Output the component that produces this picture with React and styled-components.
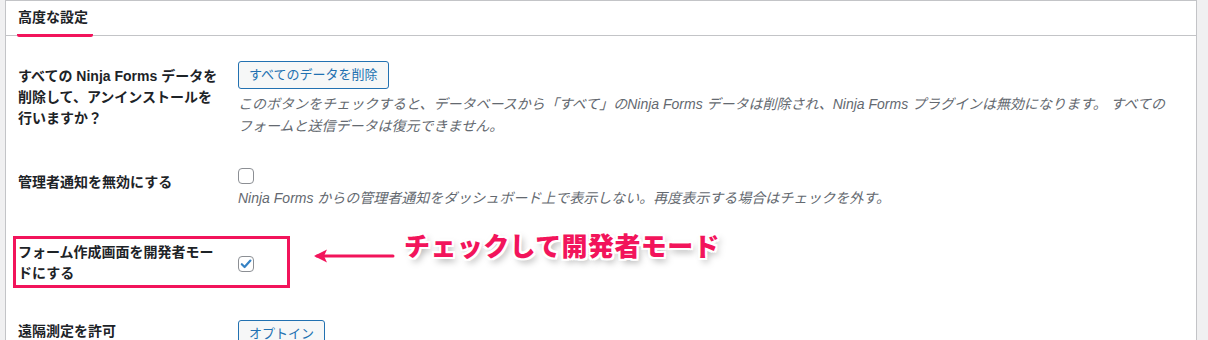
import styled, { createGlobalStyle } from "styled-components";

const GlobalStyle = createGlobalStyle`
  html, body {
    margin: 0;
    padding: 0;
    background: #f0f0f1;
    font-family: "Liberation Sans", "Noto Sans CJK JP", sans-serif;
    color: #1d2327;
  }
`;

const PINK = "#f2145b";

const Page = styled.div`
  padding: 0 11px 0 5px;
  height: 340px;
  overflow: hidden;
`;

const Panel = styled.div`
  background: #fff;
  border: 1px solid #c3c4c7;
  border-bottom: none;
  min-height: 360px;
`;

const Header = styled.div`
  height: 34px;
  border-bottom: 1px solid #c3c4c7;
  padding-left: 11px;
  display: flex;
  align-items: flex-end;
`;

const Tab = styled.h2`
  margin: 0;
  font-size: 14px;
  font-weight: 700;
  line-height: 20px;
  padding: 0 5px 7px 1px;
  position: relative;
  top: 2px;
  border-bottom: 3px solid ${PINK};
  border-radius: 2px;
`;

const Table = styled.div`
  margin-top: 10px;
`;

const Row = styled.div`
  display: grid;
  grid-template-columns: 220px 1fr;
  padding-left: 12px;
  position: relative;
`;

const Label = styled.div`
  font-size: 14px;
  font-weight: 700;
  line-height: 21px;
  padding: 20px 10px ${(p) => p.$bottom ?? 20}px 0;
  width: 200px;
`;

const Field = styled.div`
  display: flex;
  flex-direction: column;
  align-items: flex-start;
  padding: ${(p) => p.$top ?? 15}px 10px ${(p) => p.$bottom ?? 15}px 0;
`;

const Button = styled.button`
  font-family: inherit;
  font-size: 13px;
  color: #2271b1;
  background: #f6f7f7;
  border: 1px solid #2271b1;
  border-radius: 3px;
  height: 28px;
  padding: 0 10px;
  line-height: 26px;
  cursor: pointer;
`;

const Box = styled.span`
  display: block;
  width: 16px;
  height: 16px;
  box-sizing: border-box;
  border: 1px solid #8c8f94;
  border-radius: 4px;
  background: #fff;
  position: relative;
  svg {
    position: absolute;
    left: 1px;
    top: 1px;
  }
`;

const Description = styled.p`
  margin: ${(p) => p.$gap ?? 4}px 0 0;
  font-size: 14px;
  line-height: 22px;
  font-style: italic;
  color: #646970;
  max-width: 930px;
`;

const Highlight = styled.div`
  position: absolute;
  left: 7px;
  top: 14px;
  width: 277px;
  height: 52px;
  box-sizing: border-box;
  border: 3px solid ${PINK};
  pointer-events: none;
`;

const Callout = styled.div`
  position: absolute;
  left: 307px;
  top: 7px;
  display: flex;
  align-items: flex-start;
  gap: 9px;
  pointer-events: none;
  svg {
    margin-top: 19px;
  }
`;

const CalloutText = styled.span`
  font-family: "Noto Sans CJK JP", sans-serif;
  font-size: 26px;
  line-height: 31px;
  font-weight: 900;
  letter-spacing: 0.4px;
  color: ${PINK};
  text-shadow: 2px 0 #fff, -2px 0 #fff, 0 2px #fff, 0 -2px #fff,
    2px 2px #fff, -2px -2px #fff, 2px -2px #fff, -2px 2px #fff,
    3px 4px 7px rgba(0, 0, 0, 0.35);
`;

const Checkbox = ({ checked }) => (
  <Box>
    {checked && (
      <svg width="12" height="12" viewBox="0 0 12 12">
        <path
          d="M1.8 6.2 L4.6 9 L10.4 2.6"
          fill="none"
          stroke="#3582c4"
          strokeWidth="2.2"
          strokeLinecap="round"
          strokeLinejoin="round"
        />
      </svg>
    )}
  </Box>
);

const Arrow = () => (
  <svg width="82" height="16" viewBox="0 0 82 16">
    <path d="M4 8 H80" stroke={PINK} strokeWidth="3" strokeLinecap="round" />
    <path d="M1 8 L14 1.5 L11 8 L14 14.5 Z" fill={PINK} />
  </svg>
);

export default function App() {
  return (
    <>
      <GlobalStyle />
      <Page>
        <Panel>
          <Header>
            <Tab>高度な設定</Tab>
          </Header>
          <Table>
            <Row>
              <Label>すべての Ninja Forms データを削除して、アンインストールを行いますか？</Label>
              <Field>
                <Button>すべてのデータを削除</Button>
                <Description>
                  このボタンをチェックすると、データベースから「すべて」のNinja Forms データは削除され、Ninja Forms プラグインは無効になります。 すべてのフォームと送信データは復元できません。
                </Description>
              </Field>
            </Row>
            <Row>
              <Label $bottom={13}>管理者通知を無効にする</Label>
              <Field $top={16} $bottom={13}>
                <Checkbox />
                <Description $gap={3}>
                  Ninja Forms からの管理者通知をダッシュボード上で表示しない。再度表示する場合はチェックを外す。
                </Description>
              </Field>
            </Row>
            <Row>
              <Label $bottom={17}>フォーム作成画面を開発者モードにする</Label>
              <Field $top={34} $bottom={0}>
                <Checkbox checked />
              </Field>
              <Highlight />
              <Callout>
                <Arrow />
                <CalloutText>チェックして開発者モード</CalloutText>
              </Callout>
            </Row>
            <Row>
              <Label>遠隔測定を許可</Label>
              <Field $top={19}>
                <Button>オプトイン</Button>
              </Field>
            </Row>
          </Table>
        </Panel>
      </Page>
    </>
  );
}
